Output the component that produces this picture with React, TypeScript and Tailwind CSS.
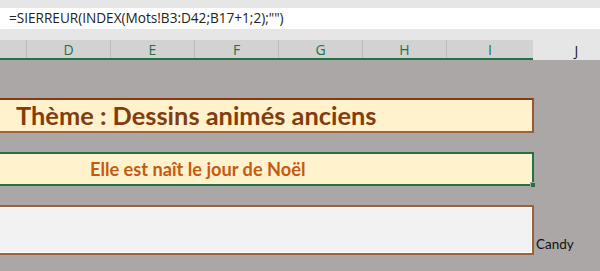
const columns = ["D", "E", "F", "G", "H", "I"];

export default function App() {
  return (
    <div className="flex h-[271px] w-[600px] flex-col overflow-hidden bg-[#aba7a6] font-['Lato',sans-serif]">
      <div className="h-[8px] bg-[#e6e6e6]" />
      <div className="flex h-[21px] items-center bg-white pl-[9px] font-['Open_Sans',sans-serif] text-[13.6px] text-[#222]">
        =SIERREUR(INDEX(Mots!B3:D42;B17+1;2);"")
      </div>
      <div className="h-[11px] bg-[#e6e6e6]" />

      {/* column headers */}
      <div className="flex h-[20px]">
        <div className="flex border-b-2 border-[#217346] bg-[#d2d2d2]">
          <div className="w-[27px] border-r border-[#bdbdbd]" />
          {columns.map((c, i) => (
            <div
              key={c}
              className={
                i < columns.length - 1
                  ? "flex w-[84px] items-center justify-center border-r border-[#bdbdbd] font-['Open_Sans',sans-serif] text-[14px] text-[#217346]"
                  : "flex w-[86px] items-center justify-center font-['Open_Sans',sans-serif] text-[14px] text-[#217346]"
              }
            >
              {c}
            </div>
          ))}
        </div>
        <div className="flex flex-1 items-center justify-center bg-[#e6e6e6] pl-[20px] font-['Open_Sans',sans-serif] text-[14px] text-[#222]">
          J
        </div>
      </div>

      {/* sheet area */}
      <div className="flex flex-col pt-[38px]">
        <div className="flex h-[35px] w-[534px] items-center border-t-2 border-r-2 border-b-2 border-t-[#8a3a10] border-r-[#9a5a30] border-b-[#a0643a] bg-[#fff2cc] pl-[16px]">
          <span className="text-[25.4px] font-bold leading-none text-[#843c0c]">
            Thème : Dessins animés anciens
          </span>
        </div>

        <div className="relative mt-[19px] flex h-[34px] w-[534px] items-center border-y-2 border-r-2 border-[#217346] bg-[#fff2cc] pl-[90px]">
          <span className="text-[18.2px] font-bold leading-none text-[#c55a11]">Elle est naît le jour de Noël</span>
          <div className="absolute right-[-4px] bottom-[-4px] h-[6px] w-[6px] border border-[#aba7a6] bg-[#217346]" />
        </div>

        <div className="mt-[19px] flex items-end">
          <div className="h-[50px] w-[534px] border-y-2 border-r-2 border-[#9c6239] bg-[#f2f2f2] shadow-[inset_0_1px_0_#ffffff,inset_0_-1px_0_#ffffff,inset_-1px_0_0_#ffffff]" />
          <span className="pb-[1px] pl-[2px] text-[13.5px] text-[#111]">Candy</span>
        </div>
      </div>
    </div>
  );
}
